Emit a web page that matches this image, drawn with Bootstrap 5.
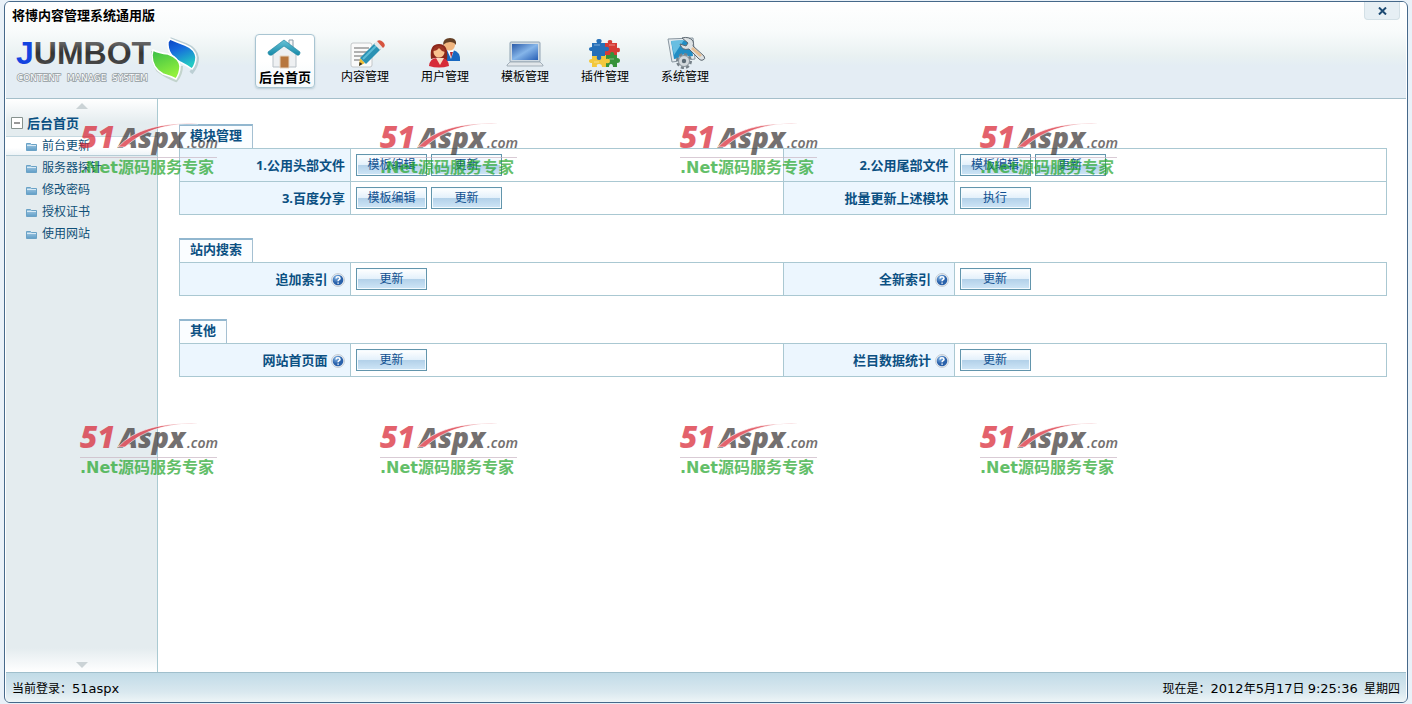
<!DOCTYPE html>
<html lang="zh-CN">
<head>
<meta charset="utf-8">
<meta name="viewport" content="width=device-width, initial-scale=1">
<title>将博内容管理系统通用版</title>
<link href="https://cdn.jsdelivr.net/npm/bootstrap@5.3.0/dist/css/bootstrap.min.css" rel="stylesheet">
<style>
  body { background: #e9f1f8; color: #000; font: 12px/18px "Noto Sans", "Noto Sans CJK SC", sans-serif; padding: 1px 4px; }
  .app-window { border: 1px solid #46698a; border-radius: 6px; background: #fff; overflow: hidden; padding: 0 1px; min-height: 0; }
  .app-head { height: 97px; background: linear-gradient(#fff 0, #f8fbfb 30px, #e9f1f2 54px, #e4edf4 64px); border-bottom: 1px solid #a5bfca; }
  .app-title { font-size: 13px; line-height: 18px; font-weight: 700; margin: 4px 0 0 6px; color: #000; }
  .head-row { gap: 53px; margin-top: 10px; }
  .brand-art { width: 190px; height: 54px; margin-left: 6px; }
  .btn-x { width: 36px; height: 18px; margin-right: 6px; padding: 0; border: 1px solid #d3e0e6; border-top: 0; border-radius: 0 0 4px 4px; background: #e6eff4; line-height: 1; }
  .main-nav { gap: 20px; }
  .tool-link { width: 60px; height: 54px; padding-top: 1px; border: 1px solid transparent; border-radius: 4px; color: #000; text-decoration: none; white-space: nowrap; }
  .tool-link svg { width: 32px; height: 32px; overflow: visible; display: block; }
  .tool-link.active { font-size: 13px; font-weight: 700; border-color: #a9c5d2; background: linear-gradient(#fff, #fff 50%, #f4f9fb); box-shadow: 0 1px 2px #b9cbd4; }
  .side { width: 152px; border-right: 1px solid #aacad2; background: linear-gradient(#fff 0, #e4ecef 24px, #e4ecef calc(100% - 24px), #fff 100%); }
  .arrow { width: 12px; height: 6px; display: block; margin: 4px auto 0; }
  .side-title { font-size: 13px; line-height: 18px; font-weight: 700; color: #0b5082; gap: 4px; padding: 0 0 4px 5px; margin-top: 4px; height: 23px; }
  .side-title button { border: 0; background: none; padding: 0; line-height: 0; }
  .side-list a { display: flex; align-items: center; gap: 5px; height: 22px; padding-left: 20px; color: #0f5077; text-decoration: none; }
  .side-list a.active { background: #fff linear-gradient(#fff 60%, #edf4f7); height: 20px; border-top: 1px solid #c5d8e0; border-bottom: 1px solid #b5ccd6; }
  .side-list li:nth-child(2) a { margin-top: 1px; }
  .work { padding: 25px 19px 0 21px; }
  .block { margin-bottom: 23px; }
  .block h2 { display: table; font-size: 13px; line-height: 18px; font-weight: 700; color: #0b5082; margin: 0; height: 24px; padding: 0 10px 4px; border: 1px solid #a5c0d2; border-top: 2px solid #92b7cf; border-bottom: 0; background: #fafdff; }
  .grid { width: 100%; table-layout: fixed; border-collapse: collapse; }
  .grid th, .grid td { border: 1px solid #aac8d2; height: 33px; padding: 0 5px; vertical-align: middle; }
  .grid th { width: 171px; background: #ecf6fe; color: #0b5082; font-size: 13px; text-align: right; white-space: nowrap; }
  .help { width: 14px; height: 14px; vertical-align: -3px; }
  .act { width: 71px; height: 22px; padding: 0; border: 1px solid #6295ac; box-shadow: inset 0 0 0 1px #f4fbff; background: linear-gradient(#fff 0, #e3f0fb 50%, #b3d1e9 52%, #cfe6f7 100%); color: #0f5090; line-height: 18px; }
  .app-foot { height: 30px; padding: 2px 6px 0; border-top: 1px solid #a0bfcc; background: linear-gradient(#c1dbe7, #d9e8ef 65%, #eef5f7); }
  .wide { font: 13px "DejaVu Sans", sans-serif; }
  .wm { left: 80px; top: 120px; display: grid; grid-template-columns: repeat(4, 300px); grid-auto-rows: 300px; opacity: .7; pointer-events: none; }
  .wm svg { overflow: visible; }
</style>
</head>
<body class="vh-100 d-flex flex-column overflow-hidden position-relative">
<svg width="0" height="0" class="position-absolute" aria-hidden="true">
  <defs>
    <linearGradient id="ink" x2="0" y2="1"><stop offset=".1" stop-color="#777"/><stop offset=".5" stop-color="#333"/><stop offset="1" stop-color="#555"/></linearGradient>
    <linearGradient id="blu" x2=".4" y2="1"><stop stop-color="#0840c0"/><stop offset=".4" stop-color="#1568dd"/><stop offset="1" stop-color="#24c8c4"/></linearGradient>
    <linearGradient id="grn" x2=".4" y2="1"><stop stop-color="#38bd48"/><stop offset="1" stop-color="#91f03d"/></linearGradient>
    <linearGradient id="roof" x2="0" y2="1"><stop stop-color="#69c2d6"/><stop offset="1" stop-color="#168aa9"/></linearGradient>
    <linearGradient id="scr" x2="1" y2="1"><stop stop-color="#2b5ba9"/><stop offset=".5" stop-color="#85b5e9"/><stop offset="1" stop-color="#275fb5"/></linearGradient>
    <linearGradient id="fold" x2="0" y2="1"><stop stop-color="#a8cce4"/><stop offset="1" stop-color="#5f9dc7"/></linearGradient>
    <radialGradient id="orb" cx=".35" cy=".25"><stop stop-color="#86b8e8"/><stop offset="1" stop-color="#2a62ab"/></radialGradient>
  </defs>
  <symbol id="folder" viewBox="0 0 11 9"><path d="M.5 8.500v-7h4l1 1h5v6z" fill="url(#fold)" stroke="#6aa2c6"/><path d="M1 3.500h9" stroke="#d8eaf5"/></symbol>
  <symbol id="helpicon" viewBox="0 0 14 14"><circle cx="7" cy="7" r="6.500" fill="#e6ebf0" stroke="#c6ced6"/><circle cx="7" cy="7" r="5.300" fill="url(#orb)"/><path d="M5 5.500Q5.200 3.700 7 3.700T9 5.400Q8.900 6.300 7.800 6.800Q7.100 7.200 7.100 8.200M7.100 9.400v1.400" fill="none" stroke="#fff" stroke-width="1.500"/></symbol>
</svg>

<div class="app-window d-flex flex-column flex-grow-1">
  <header class="app-head flex-shrink-0">
    <div class="d-flex justify-content-between align-items-start">
      <h1 class="app-title">将博内容管理系统通用版</h1>
      <button class="btn-x" type="button" aria-label="关闭"><svg width="9" height="8" viewBox="0 0 9 8"><path d="M1 .500l7 7M8 .500l-7 7" stroke="#1c4a72" stroke-width="2"/></svg></button>
    </div>
    <div class="head-row d-flex align-items-start">
      <svg class="brand-art flex-shrink-0" viewBox="12 34 190 54" role="img" aria-label="JUMBOT">
        <text x="16" y="64" font-family="Liberation Sans" font-size="32" font-weight="700" fill="url(#ink)"><tspan fill="#1444e0">J</tspan>UMBOT</text>
        <text y="81" font-family="DejaVu Sans" font-size="9" fill="#fff" stroke="#929ba0" stroke-width="1.500" paint-order="stroke"><tspan x="17">CONTENT</tspan> <tspan x="67">MANAGE</tspan> <tspan x="112">SYSTEM</tspan></text>
        <path d="M170 39Q178 42 186 45Q196 49 197 58Q197 66 191 73" fill="none" stroke="#bccfd4" stroke-width="4"/>
        <path d="M153 51Q153 62 158 70Q167 77 176 80Q181 74 181 66" fill="none" stroke="#c3d4cd" stroke-width="4"/>
        <path d="M170 39Q177 42 185 45Q195 49 196 57Q196 64 192 69Q186 65 180 62Q167 55 168 42Z" fill="url(#blu)" stroke="#fff" stroke-width="1.500"/>
        <path d="M153 50Q159 53 168 54Q179 58 180 66Q180 73 176 79Q170 76 163 74Q152 68 152 55Z" fill="url(#grn)" stroke="#fff" stroke-width="1.500"/>
      </svg>
      <nav class="main-nav d-flex" aria-label="主导航">
        <a href="#" class="tool-link active d-flex flex-column align-items-center">
          <svg viewBox="0 0 32 32"><path d="M20 4h4v9h-4z" fill="#f4f6f7" stroke="#889ba8"/><path d="M4 17L15 8L27 17V31H4z" fill="#eef0f2" stroke="#b9c1c7"/><path d="M11 20h9v12h-9z" fill="#b7763d" stroke="#e5d3c0"/><path d="M15 4L31 16Q31 20 28 19L15 10L3 19Q-1 20-1 16Z" fill="url(#roof)" stroke="#278ba5" stroke-width=".7"/></svg><span>后台首页</span></a>
        <a href="#" class="tool-link d-flex flex-column align-items-center">
          <svg viewBox="0 0 32 32"><rect x="2" y="7" width="21" height="24" rx="2" fill="#fafafa" stroke="#c4c8ca"/><path d="M5 12h15M5 16h13M5 20h10M5 24h6" stroke="#999" stroke-width="1.500"/><path d="M10 30l1-8 5 5z" fill="#f1be35"/><path d="M11 22L26 7l6 6-15 15z" fill="#2a92b4"/><path d="M14 23L28 9" stroke="#5cbbd5" stroke-width="2"/><path d="M25 8l3-3 6 6-3 3z" fill="#e6e6e6"/><path d="M28 5q3-2 6 1t1 5l-1 1z" fill="#d6543f"/><path d="M10 30l.5-4 3 2z" fill="#333"/></svg><span>内容管理</span></a>
        <a href="#" class="tool-link d-flex flex-column align-items-center">
          <svg viewBox="0 0 32 32"><path d="M12 25Q11 15 18 14H24Q32 16 31 25Z" fill="#1767c0"/><path d="M18 14l4 9 3-9z" fill="#fff"/><path d="M21 16l1 6 2-6z" fill="#b62a32"/><circle cx="20.500" cy="9" r="5.500" fill="#f1b57e"/><path d="M14 9Q14 2 21 2T27 9Q25 6 21 6T14 9" fill="#654025"/><path d="M2 23Q0 8 10 8T18 24Q10 20 2 23Z" fill="#8b271b"/><circle cx="10" cy="16" r="5.500" fill="#f9c28f"/><path d="M4 15Q5 9 12 10Q16 11 16 16Q12 15 10 12Q8 15 4 15" fill="#9c3321"/><path d="M0 30Q1 22 8 22L11 27L14 22Q20 24 20 30Q10 33 0 30Z" fill="#d62b39"/><path d="M7 22l4 7 4-7z" fill="#fadbc4"/></svg><span>用户管理</span></a>
        <a href="#" class="tool-link d-flex flex-column align-items-center">
          <svg viewBox="0 0 32 32"><rect x="1" y="6" width="30" height="20" rx="1" fill="#d1dbe3" stroke="#91a4b3"/><path d="M3 8h26v16H3z" fill="url(#scr)"/><path d="M1 26h30l3 3v1H-2v-1z" fill="#e1e6ea" stroke="#94a2ad" stroke-width=".8"/></svg><span>模板管理</span></a>
        <a href="#" class="tool-link d-flex flex-column align-items-center">
          <svg viewBox="0 0 32 32"><path d="M14 7h5q-1-3 2-3t2 3h5v5q3-1 3 2t-3 2v5h-14z" fill="#d63b35"/><path d="M16 19h12v3q3 0 3 2.500t-3 2.500v4h-4q0-3-2-3t-2 3h-4z" fill="#36923a"/><path d="M3 19h14v4q4-1 4 2t-4 2v4h-4q0-3-3-3t-2 3H3v-4q-3 0-3-2t3-2z" fill="#f3c83c"/><path d="M3 7h5Q6 3 10 3t2 4h4v4q4-1 4 2t-4 2v5h-4q1 4-2 4t-2-4H3v-5Q0 15 0 13t3-2z" fill="#256fb8"/><path d="M22 21q-2-5 1-5t2 5z" fill="#36923a"/><path d="M5 9h6M20 9h6M5 26h5M20 23h5" stroke="#fff" opacity=".4"/></svg><span>插件管理</span></a>
        <a href="#" class="tool-link d-flex flex-column align-items-center">
          <svg viewBox="0 0 32 32"><path d="M-1 3L24 2L26 23L3 26Z" fill="#e4ebef" stroke="#88959f"/><path d="M2 5L22 4L24 20L5 23Z" fill="#228dc4"/><path d="M2 5L15 4L5 19Z" fill="#68bee1"/><circle cx="15" cy="25" r="6.500" fill="#dce1e4" stroke="#77828a" stroke-width="3" stroke-dasharray="3 2"/><circle cx="15" cy="25" r="5.500" fill="#d3d9dd" stroke="#89949c"/><circle cx="15" cy="25" r="2.200" fill="#5c6b75"/><path d="M13 2Q20 0 24 5Q25 8 24 10L35 20Q37 23 34 24Q32 25 30 23L20 13Q13 15 11 8L17 10L19 7Z" fill="#dde2e4" stroke="#5d6871"/><path d="M23 12l9 8" stroke="#e7bf94" stroke-width="3"/></svg><span>系统管理</span></a>
      </nav>
    </div>
  </header>

  <div class="d-flex flex-grow-1">
    <aside class="side flex-shrink-0 d-flex flex-column">
      <svg class="arrow" viewBox="0 0 12 6"><path d="M0 6L6 0l6 6z" fill="#cbd3d6"/></svg>
      <div class="side-title d-flex align-items-center"><button type="button" aria-label="收起"><svg width="12" height="12" viewBox="0 0 12 12"><path d="M.5.5h11v11H.5z" fill="#fff" stroke="#87928f"/><path d="M3 6h6" stroke="#333"/></svg></button>后台首页</div>
      <ul class="side-list list-unstyled mb-auto">
        <li><a href="#" class="active"><svg width="11" height="9"><use href="#folder"/></svg>前台更新</a></li>
        <li><a href="#"><svg width="11" height="9"><use href="#folder"/></svg>服务器探针</a></li>
        <li><a href="#"><svg width="11" height="9"><use href="#folder"/></svg>修改密码</a></li>
        <li><a href="#"><svg width="11" height="9"><use href="#folder"/></svg>授权证书</a></li>
        <li><a href="#"><svg width="11" height="9"><use href="#folder"/></svg>使用网站</a></li>
      </ul>
      <svg class="arrow mb-1 mt-0" viewBox="0 0 12 6"><path d="M0 0h12L6 6z" fill="#cbd3d6"/></svg>
    </aside>
    <main class="work flex-grow-1">
      <section class="block">
        <h2>模块管理</h2>
        <table class="grid">
          <tr><th scope="row">1.公用头部文件</th><td><div class="d-flex gap-1"><button class="act" type="button">模板编辑</button><button class="act" type="button">更新</button></div></td><th scope="row">2.公用尾部文件</th><td><div class="d-flex gap-1"><button class="act" type="button">模板编辑</button><button class="act" type="button">更新</button></div></td></tr>
          <tr><th scope="row">3.百度分享</th><td><div class="d-flex gap-1"><button class="act" type="button">模板编辑</button><button class="act" type="button">更新</button></div></td><th scope="row">批量更新上述模块</th><td><div class="d-flex"><button class="act" type="button">执行</button></div></td></tr>
        </table>
      </section>
      <section class="block">
        <h2>站内搜索</h2>
        <table class="grid">
          <tr><th scope="row">追加索引 <svg class="help"><use href="#helpicon"/></svg></th><td><div class="d-flex"><button class="act" type="button">更新</button></div></td><th scope="row">全新索引 <svg class="help"><use href="#helpicon"/></svg></th><td><div class="d-flex"><button class="act" type="button">更新</button></div></td></tr>
        </table>
      </section>
      <section class="block">
        <h2>其他</h2>
        <table class="grid">
          <tr><th scope="row">网站首页面 <svg class="help"><use href="#helpicon"/></svg></th><td><div class="d-flex"><button class="act" type="button">更新</button></div></td><th scope="row">栏目数据统计 <svg class="help"><use href="#helpicon"/></svg></th><td><div class="d-flex"><button class="act" type="button">更新</button></div></td></tr>
        </table>
      </section>
    </main>
  </div>

  <footer class="app-foot flex-shrink-0 d-flex justify-content-between align-items-center">
    <div>当前登录：<span class="wide">51aspx</span></div>
    <div>现在是：<span class="wide">2012</span>年<span class="wide">5</span>月<span class="wide">17</span>日 <span class="wide">9:25:36</span>&nbsp; 星期四</div>
  </footer>
</div>

<div class="wm position-absolute" id="wm" aria-hidden="true"></div>
<template id="stamp">
  <svg width="140" height="62" viewBox="0 0 140 62">
    <text x="0" y="28" font-family="Open Sans" font-size="30" font-weight="800" font-style="italic" fill="#d8202f">51</text>
    <text x="39" y="28" font-family="Open Sans" font-size="28" font-weight="800" font-style="italic" fill="#3a3434">Aspx</text>
    <text x="107" y="28" font-family="Noto Sans" font-size="14" font-weight="600" font-style="italic" fill="#3a3434">.com</text>
    <path d="M38 27Q62 1 118 4Q72 2 45 27Z" fill="#d8202f" stroke="#fff" stroke-width=".6"/>
    <path d="M0 37.500h137" stroke="#c9b6c4"/>
    <text x="0" y="53" font-family="DejaVu Sans, Noto Sans CJK SC" font-size="16" font-weight="700" fill="#22a52a">.Net源码服务专家</text>
  </svg>
</template>
<script>
  for (let i = 0; i < 8; i++) document.getElementById('wm').append(document.getElementById('stamp').content.cloneNode(true));
</script>
<script src="https://cdn.jsdelivr.net/npm/bootstrap@5.3.0/dist/js/bootstrap.bundle.min.js"></script>
</body>
</html>
